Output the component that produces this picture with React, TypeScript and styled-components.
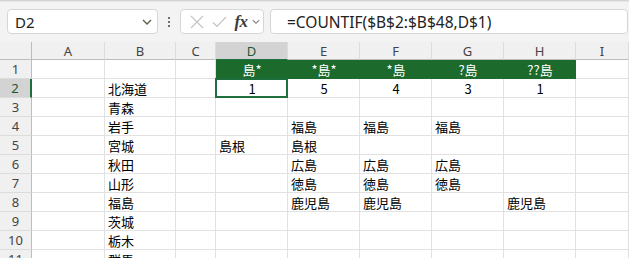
import React, { FC } from 'react'
import styled, { createGlobalStyle, css } from 'styled-components'

const GlobalStyle = createGlobalStyle`
    html, body { margin: 0; padding: 0; background: #ffffff; overflow: hidden; }
    #root { width: 629px; height: 258px; overflow: hidden; }
`

const green = '#1d6b2c'
const selGreen = '#1f6e3e'
const uiFont = `"Noto Sans", "Open Sans", sans-serif`
const cellFont = `"Noto Sans CJK JP", "Noto Sans", sans-serif`

const Page = styled.div`
    width: 629px;
    height: 258px;
    display: flex;
    flex-direction: column;
    background: #f3f3f3;
`

const TopStrip = styled.div`
    height: 2px;
    background: #fafafa;
    border-bottom: 1px solid #d4d4d4;
    box-shadow: 0 1px 1px rgba(0, 0, 0, 0.06);
`

const Toolbar = styled.div`
    display: flex;
    align-items: center;
    height: 25px;
    padding: 8px 1px 8px 7px;
`

const Box = styled.div<{ $width?: number }>`
    box-sizing: border-box;
    height: 25px;
    background: #ffffff;
    border: 1px solid #d6d6d6;
    border-radius: 4px;
    display: flex;
    align-items: center;
    ${(p) => (p.$width ? css`width: ${p.$width}px;` : css`flex: 1;`)}
`

const NameBox = styled(Box)`
    justify-content: space-between;
    padding: 0 5px 0 7px;
    font-family: ${uiFont};
    font-size: 15px;
    color: #222;
`

const Grip = styled.div`
    width: 22px;
    display: flex;
    flex-direction: column;
    align-items: center;
    gap: 2px;
    > span {
        width: 2px;
        height: 2px;
        background: #444;
        border-radius: 1px;
    }
`

const ButtonsBox = styled(Box)`
    padding: 0 3px 0 5px;
    gap: 0;
`

const IconSlot = styled.div<{ $w: number }>`
    width: ${(p) => p.$w}px;
    display: flex;
    justify-content: center;
    align-items: center;
`

const Fx = styled.span`
    font-family: "Liberation Serif", serif;
    font-style: italic;
    font-weight: 700;
    font-size: 17px;
    color: #3b3b3b;
    letter-spacing: -0.5px;
`

const FormulaBox = styled(Box)`
    margin-left: 6px;
    padding-left: 16px;
    font-family: ${uiFont};
    font-size: 15.5px;
    color: #222;
    white-space: nowrap;
    overflow: hidden;
`

const Sheet = styled.div`
    display: grid;
    grid-template-columns: 32px 73px 71px 40px 72px 72px 72px 72px 72px 1fr;
    grid-auto-rows: 19px;
    grid-template-rows: 18px;
    background: #ffffff;
`

const HeaderCell = styled.div<{ $active?: boolean }>`
    box-sizing: border-box;
    display: flex;
    align-items: center;
    justify-content: center;
    background: ${(p) => (p.$active ? '#d3d3d3' : '#f0f0f0')};
    border-right: 1px solid #dcdcdc;
    border-bottom: 1px solid ${(p) => (p.$active ? selGreen : '#bdbdbd')};
    font-family: ${uiFont};
    font-size: 13px;
    color: ${(p) => (p.$active ? '#1a5a32' : '#444')};
`

const Corner = styled(HeaderCell)`
    position: relative;
    border-right: 1px solid #bdbdbd;
    ::after {
        content: '';
        position: absolute;
        right: 3px;
        bottom: 3px;
        border-left: 11px solid transparent;
        border-bottom: 11px solid #dadada;
    }
`

const RowHead = styled.div<{ $active?: boolean }>`
    box-sizing: border-box;
    display: flex;
    align-items: center;
    justify-content: center;
    background: ${(p) => (p.$active ? '#d3d3d3' : '#f0f0f0')};
    border-right: ${(p) => (p.$active ? `2px solid ${selGreen}` : '1px solid #bdbdbd')};
    border-bottom: 1px solid #dcdcdc;
    font-family: ${uiFont};
    font-size: 13px;
    color: ${(p) => (p.$active ? '#1a5a32' : '#444')};
`

const Cell = styled.div<{ $center?: boolean; $head?: boolean; $selected?: boolean }>`
    position: relative;
    box-sizing: border-box;
    display: flex;
    align-items: center;
    justify-content: ${(p) => (p.$center ? 'center' : 'flex-start')};
    padding: 1px 2px 0 3px;
    white-space: nowrap;
    border-right: 1px solid #e1e1e1;
    border-bottom: 1px solid #e1e1e1;
    font-family: ${cellFont};
    font-size: 13px;
    color: #000;
    ${(p) =>
        p.$head &&
        css`
            background: ${green};
            border-right-color: ${green};
            border-bottom-color: ${green};
            color: #ffffff;
        `}
`

const Selection = styled.div`
    position: absolute;
    left: -1px;
    top: -1px;
    right: -1px;
    bottom: -1px;
    border: 2px solid ${selGreen};
    pointer-events: none;
    ::after {
        content: '';
        position: absolute;
        right: -4px;
        bottom: -4px;
        width: 5px;
        height: 5px;
        background: ${selGreen};
        border: 1px solid #ffffff;
    }
`

const Chevron: FC<{ color: string; size: number }> = ({ color, size }) => (
    <svg width={size} height={size * 0.6} viewBox="0 0 10 6">
        <path d="M1 1 L5 5 L9 1" fill="none" stroke={color} strokeWidth="1.3" />
    </svg>
)

const columns = ['A', 'B', 'C', 'D', 'E', 'F', 'G', 'H', 'I']

type Row = Record<string, string>

const rows: Row[] = [
    { D: '島*', E: '*島*', F: '*島', G: '?島', H: '??島' },
    { B: '北海道', D: '1', E: '5', F: '4', G: '3', H: '1' },
    { B: '青森' },
    { B: '岩手', E: '福島', F: '福島', G: '福島' },
    { B: '宮城', D: '島根', E: '島根' },
    { B: '秋田', E: '広島', F: '広島', G: '広島' },
    { B: '山形', E: '徳島', F: '徳島', G: '徳島' },
    { B: '福島', E: '鹿児島', F: '鹿児島', H: '鹿児島' },
    { B: '茨城' },
    { B: '栃木' },
    { B: '群馬' },
]

const App: FC = () => (
    <>
        <GlobalStyle />
        <Page>
            <TopStrip />
            <Toolbar>
                <NameBox $width={151}>
                    <span>D2</span>
                    <Chevron color="#5b5b42" size={10} />
                </NameBox>
                <Grip>
                    <span />
                    <span />
                    <span />
                </Grip>
                <ButtonsBox $width={84}>
                    <IconSlot $w={22}>
                        <svg width="14" height="14" viewBox="0 0 14 14">
                            <path d="M1 1 L13 13 M13 1 L1 13" stroke="#c4c4c4" strokeWidth="1.2" />
                        </svg>
                    </IconSlot>
                    <IconSlot $w={22}>
                        <svg width="15" height="12" viewBox="0 0 15 12">
                            <path d="M1 6.5 L5 10.5 L14 1" fill="none" stroke="#c4c4c4" strokeWidth="1.2" />
                        </svg>
                    </IconSlot>
                    <IconSlot $w={22}>
                        <Fx>fx</Fx>
                    </IconSlot>
                    <IconSlot $w={8}>
                        <Chevron color="#7a7a7a" size={9} />
                    </IconSlot>
                </ButtonsBox>
                <FormulaBox>=COUNTIF($B$2:$B$48,D$1)</FormulaBox>
            </Toolbar>
            <Sheet>
                <Corner />
                {columns.map((c) => (
                    <HeaderCell key={c} $active={c === 'D'}>
                        {c}
                    </HeaderCell>
                ))}
                {rows.map((row, i) => (
                    <React.Fragment key={i}>
                        <RowHead $active={i === 1}>{i + 1}</RowHead>
                        {columns.map((c) => {
                            const value = row[c] ?? ''
                            const head = i === 0 && ['D', 'E', 'F', 'G', 'H'].includes(c)
                            const numeric = /^\d+$/.test(value)
                            const selected = i === 1 && c === 'D'
                            return (
                                <Cell key={c} $head={head} $center={head || numeric}>
                                    {value}
                                    {selected && <Selection />}
                                </Cell>
                            )
                        })}
                    </React.Fragment>
                ))}
            </Sheet>
        </Page>
    </>
)

export default App
